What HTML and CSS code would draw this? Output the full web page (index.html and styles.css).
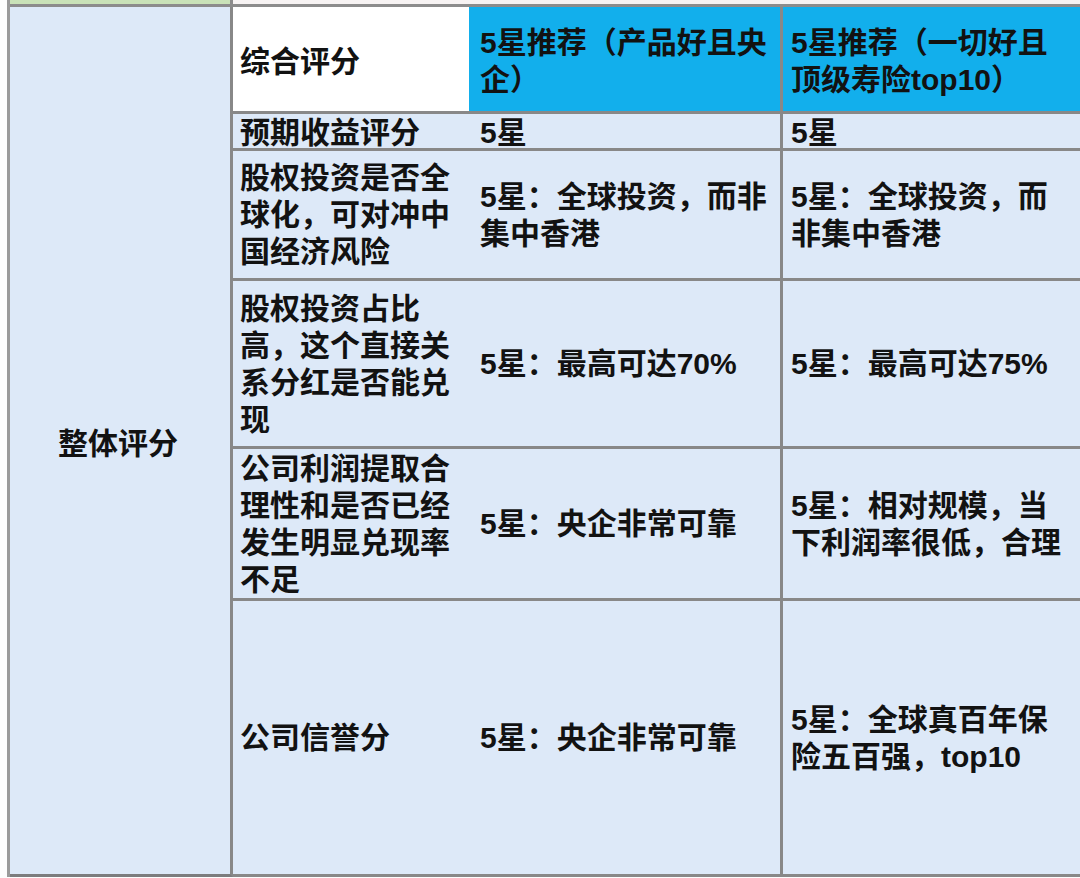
FILE: index.html
```html
<!DOCTYPE html>
<html lang="zh-CN">
<head>
<meta charset="utf-8">
<title>整体评分</title>
<link rel="stylesheet" href="styles.css">
</head>
<body>
<div class="page">
  <div class="sheet">
    <div class="strip strip-green"></div>
    <div class="strip strip-light"></div>

    <div class="cell c1 span-all">整体评分</div>

    <div class="cell c2 head-white r-head">综合评分</div>
    <div class="cell c3 head-blue r-head">5星推荐（产品好且央企）</div>
    <div class="cell c4 head-blue r-head">5星推荐（一切好且顶级寿险top10）</div>

    <div class="cell c2 r-short">预期收益评分</div>
    <div class="cell c3 r-short">5星</div>
    <div class="cell c4 r-short">5星</div>

    <div class="cell c2">股权投资是否全球化，可对冲中国经济风险</div>
    <div class="cell c3">5星：全球投资，而非集中香港</div>
    <div class="cell c4">5星：全球投资，而非集中香港</div>

    <div class="cell c2">股权投资占比高，这个直接关系分红是否能兑现</div>
    <div class="cell c3">5星：最高可达70%</div>
    <div class="cell c4">5星：最高可达75%</div>

    <div class="cell c2">公司利润提取合理性和是否已经发生明显兑现率不足</div>
    <div class="cell c3">5星：央企非常可靠</div>
    <div class="cell c4">5星：相对规模，当下利润率很低，合理</div>

    <div class="cell c2">公司信誉分</div>
    <div class="cell c3">5星：央企非常可靠</div>
    <div class="cell c4">5星：全球真百年保险五百强，top10</div>
  </div>
</div>
</body>
</html>
```

FILE: styles.css
```css
html, body {
  margin: 0;
  padding: 0;
  background: #fdfdfd;
}

.page {
  width: 1080px;
  height: 878px;
  overflow: hidden;
  padding-left: 7px;
  box-sizing: border-box;
  background: #fdfdfd;
}

.sheet {
  display: grid;
  grid-template-columns: 223px 236px 314px 1fr;
  grid-template-rows: 7px 107px 37px 130px 168px 152px 276px;
  border-left: 3px solid #9a9a9a;
  font-family: "Liberation Sans", "Noto Sans CJK SC", sans-serif;
  font-weight: 700;
  font-size: 30px;
  line-height: 37px;
  color: #121212;
}

.strip {
  box-sizing: border-box;
  border-bottom: 3px solid #8c8c8c;
}

.strip-green {
  grid-column: 1;
  grid-row: 1;
  background: #c9e2b8;
  border-right: 3px solid #8c8c8c;
}

.strip-light {
  grid-column: 2 / 5;
  grid-row: 1;
  background: #f7f3f3;
}

.cell {
  box-sizing: border-box;
  display: flex;
  align-items: center;
  background: #dde9f8;
  border-bottom: 3px solid #888888;
  overflow: hidden;
}

.c1 {
  grid-column: 1;
  justify-content: center;
  border-right: 3px solid #888888;
  border-bottom-color: #7c7c7e;
  padding-right: 4px;
  padding-top: 6px;
}

.span-all {
  grid-row: 2 / 8;
}

.c2 {
  grid-column: 2;
  padding-left: 7px;
}

.c3 {
  grid-column: 3;
  padding-left: 11px;
  border-right: 3px solid #888888;
}

.c4 {
  grid-column: 4;
  padding-left: 8px;
  padding-right: 15px;
}

.head-white {
  background: #ffffff;
}

.head-blue {
  background: #12afec;
}

.r-head {
  padding-top: 4px;
}

.r-short {
  padding-top: 4px;
  line-height: 30px;
}
```
